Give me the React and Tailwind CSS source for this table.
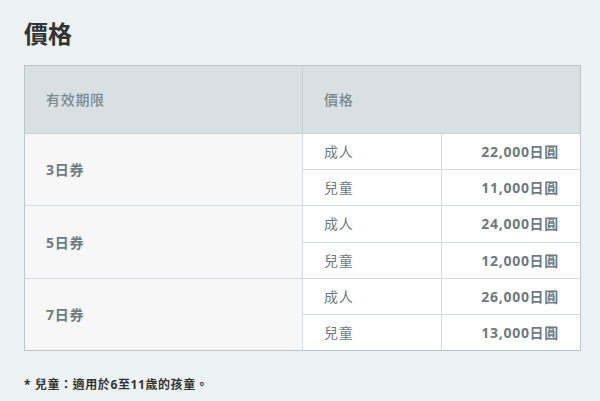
import React from 'react';

const plans = [
  { name: '3日券', adult: '22,000日圓', child: '11,000日圓' },
  { name: '5日券', adult: '24,000日圓', child: '12,000日圓' },
  { name: '7日券', adult: '26,000日圓', child: '13,000日圓' },
];

const cell = 'border border-[#d3d9dd] h-[36.2px] px-[21px] text-[14px] tracking-[0.05em]';

export default function App() {
  return (
    <div
      className="min-h-[401px] bg-[#ecf1f4] px-6 pt-[17px]"
      style={{ fontFamily: '"Noto Sans", "Noto Sans CJK TC", sans-serif' }}
    >
      <h1 className="text-[24px] font-bold text-[#333] leading-[34px] mb-[14px]">價格</h1>

      <table className="w-[556px] border-collapse table-fixed">
        <colgroup>
          <col className="w-[278px]" />
          <col className="w-[139px]" />
          <col className="w-[139px]" />
        </colgroup>
        <thead>
          <tr className="bg-[#d9e0e4]">
            <th className="border border-[#c9d0d5] border-t-[#bcc4c9] border-l-[#bcc4c9] h-[68px] px-[21px] text-left text-[14px] font-medium tracking-[0.05em] text-[#7b8990]">
              有效期限
            </th>
            <th colSpan={2} className="border border-[#c9d0d5] border-t-[#bcc4c9] border-r-[#bcc4c9] h-[68px] px-[21px] text-left text-[14px] font-medium tracking-[0.05em] text-[#7b8990]">
              價格
            </th>
          </tr>
        </thead>
        <tbody>
          {plans.map((p, i) => {
            const last = i === plans.length - 1;
            return (
              <React.Fragment key={p.name}>
                <tr>
                  <td rowSpan={2} className={`${cell} border-l-[#bcc4c9] ${last ? 'border-b-[#bcc4c9]' : ''} bg-[#f7f7f7] font-bold text-[#6d7a82]`}>{p.name}</td>
                  <td className={`${cell} bg-white text-[#6d7a82]`}>成人</td>
                  <td className={`${cell} border-r-[#bcc4c9] bg-white text-right font-bold text-[#6d7a82]`}>{p.adult}</td>
                </tr>
                <tr>
                  <td className={`${cell} ${last ? 'border-b-[#bcc4c9]' : ''} bg-white text-[#6d7a82]`}>兒童</td>
                  <td className={`${cell} border-r-[#bcc4c9] ${last ? 'border-b-[#bcc4c9]' : ''} bg-white text-right font-bold text-[#6d7a82]`}>{p.child}</td>
                </tr>
              </React.Fragment>
            );
          })}
        </tbody>
      </table>

      <p className="mt-[25px] text-[12px] font-bold tracking-[0.05em] text-[#333]">* 兒童：適用於6至11歲的孩童。</p>
    </div>
  );
}
